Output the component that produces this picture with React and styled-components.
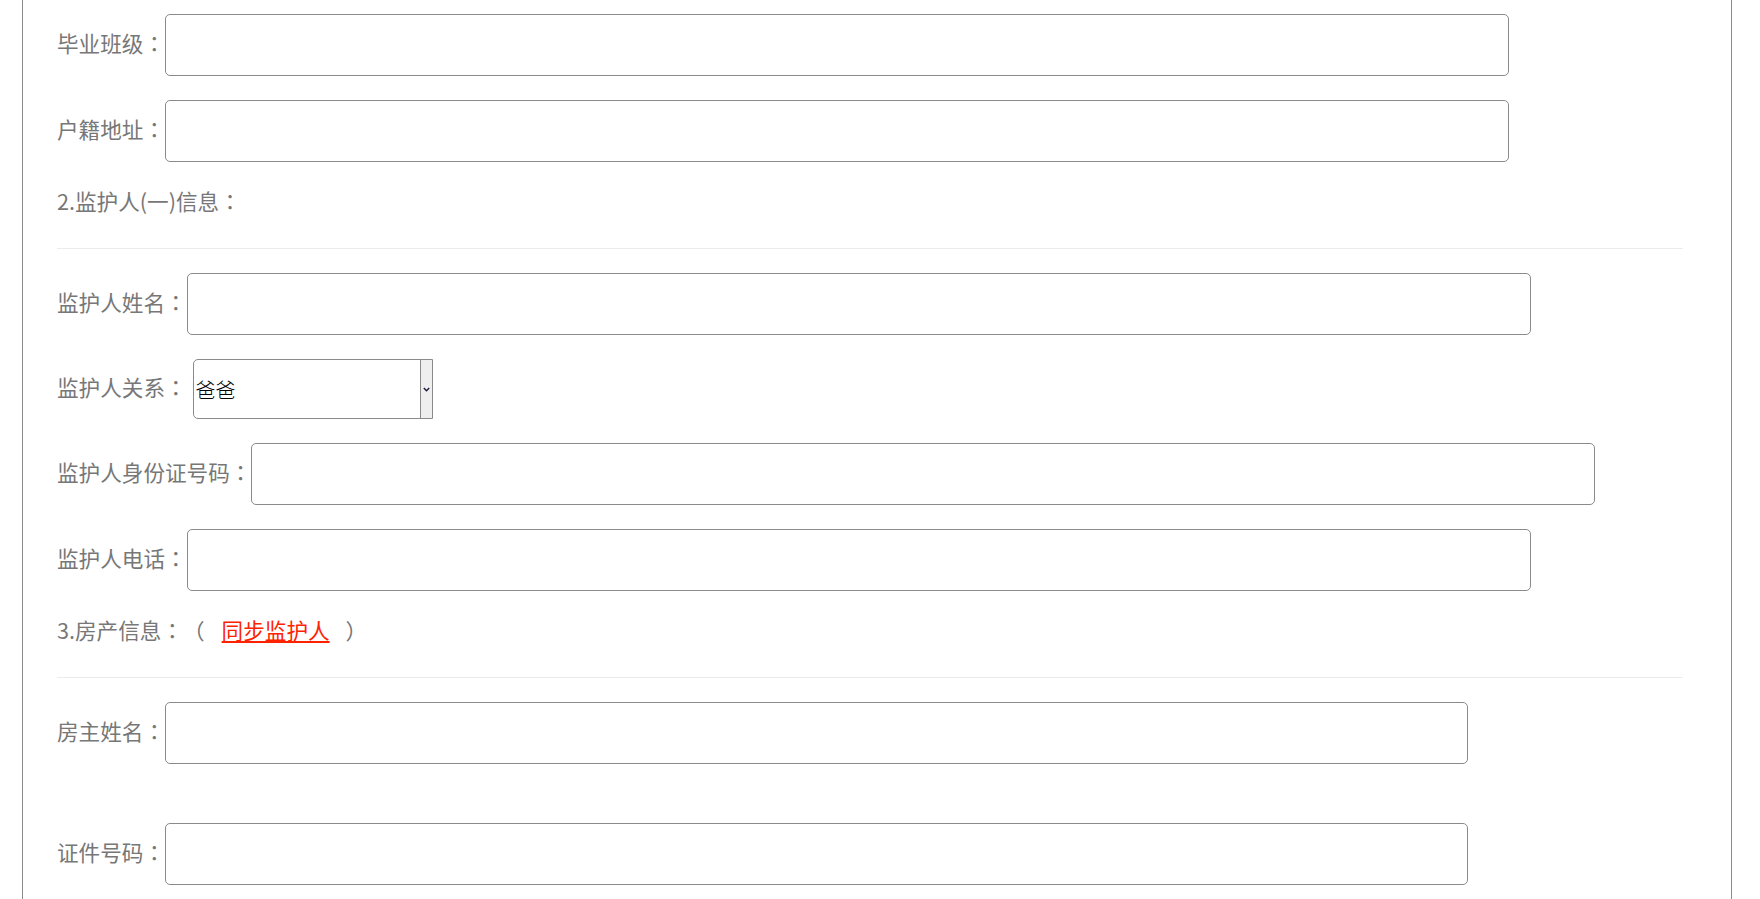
import React from "react";
import styled, { createGlobalStyle } from "styled-components";

const GlobalStyle = createGlobalStyle`
  html, body {
    margin: 0;
    padding: 0;
    background: #fff;
  }
  body {
    font-family: "Noto Sans CJK SC", "Liberation Sans", sans-serif;
  }
`;

const Page = styled.div`
  margin-left: 22px;
  width: 1710px;
  min-height: 100vh;
  border-left: 1px solid #8a8a8a;
  border-right: 1px solid #8a8a8a;
  padding: 14px 0 0 34px;
  box-sizing: border-box;
`;

const Row = styled.div`
  display: flex;
  align-items: center;
  margin-bottom: ${(p) => p.$gap || 24}px;
`;

const Label = styled.label`
  font-size: 21.6px;
  line-height: 30px;
  padding-bottom: 4px;
  color: #777;
  white-space: nowrap;
`;

// centred full-width punctuation, as in the original font
const Punct = styled.span`
  font-family: "Noto Sans CJK TC", "Noto Sans CJK SC", sans-serif;
  margin: ${(p) => p.$m || "0"};
`;

const TextInput = styled.input`
  box-sizing: border-box;
  width: ${(p) => p.$width || 1344}px;
  height: 62px;
  border: 1px solid #8a8a8a;
  border-radius: 5px;
  background: #fff;
  outline: none;
  padding: 0 8px;
  font-size: 20px;
`;

const SelectBox = styled.div`
  box-sizing: border-box;
  display: flex;
  width: 240px;
  height: 60px;
  margin-left: 6px;
  border: 1px solid #8a8a8a;
  border-radius: 5px 0 0 5px;
  background: #fff;
`;

const Select = styled.select`
  appearance: none;
  flex: 1;
  border: none;
  outline: none;
  background: transparent;
  padding: 0 0 0 2px;
  font-family: "Noto Sans CJK SC", sans-serif;
  font-weight: 300;
  font-size: 20px;
  color: #000;
`;

const ArrowZone = styled.span`
  width: 11px;
  display: flex;
  align-items: center;
  justify-content: center;
  background: #efefef;
  border-left: 1px solid #8a8a8a;
`;

const SectionTitle = styled.div`
  font-size: 21.6px;
  line-height: 30px;
  color: #777;
  margin-bottom: 32px;
  padding-bottom: 4px;
  display: flex;
  align-items: center;
`;

const SyncLink = styled.a`
  color: #ff2200;
  text-decoration: underline;
  cursor: pointer;
`;

const Divider = styled.hr`
  width: 1626px;
  height: 0;
  margin: -4px 0 24px 0;
  border: none;
  border-top: 1px solid #ececec;
`;

const Chevron = () => (
  <svg width="7" height="5" viewBox="0 0 7 5">
    <polyline points="0.8,1 3.5,3.8 6.2,1" fill="none" stroke="#1a1a3a" strokeWidth="1.4" />
  </svg>
);

const FieldLabel = ({ children }) => (
  <Label>
    {children}
    <Punct>：</Punct>
  </Label>
);

export default function App() {
  return (
    <>
      <GlobalStyle />
      <Page>
        <Row>
          <FieldLabel>毕业班级</FieldLabel>
          <TextInput />
        </Row>
        <Row>
          <FieldLabel>户籍地址</FieldLabel>
          <TextInput />
        </Row>

        <SectionTitle>
          2.监护人(一)信息<Punct>：</Punct>
        </SectionTitle>
        <Divider />

        <Row>
          <FieldLabel>监护人姓名</FieldLabel>
          <TextInput />
        </Row>
        <Row>
          <FieldLabel>监护人关系</FieldLabel>
          <SelectBox>
            <Select defaultValue="爸爸">
              <option>爸爸</option>
              <option>妈妈</option>
              <option>其他</option>
            </Select>
            <ArrowZone>
              <Chevron />
            </ArrowZone>
          </SelectBox>
        </Row>
        <Row>
          <FieldLabel>监护人身份证号码</FieldLabel>
          <TextInput />
        </Row>
        <Row>
          <FieldLabel>监护人电话</FieldLabel>
          <TextInput />
        </Row>

        <SectionTitle>
          3.房产信息<Punct>：</Punct>
          <Punct $m="0 17px 0 0">（</Punct>
          <SyncLink>同步监护人</SyncLink>
          <Punct $m="0 0 0 16px">）</Punct>
        </SectionTitle>
        <Divider />

        <Row $gap={59}>
          <FieldLabel>房主姓名</FieldLabel>
          <TextInput $width={1303} />
        </Row>
        <Row>
          <FieldLabel>证件号码</FieldLabel>
          <TextInput $width={1303} />
        </Row>
      </Page>
    </>
  );
}
